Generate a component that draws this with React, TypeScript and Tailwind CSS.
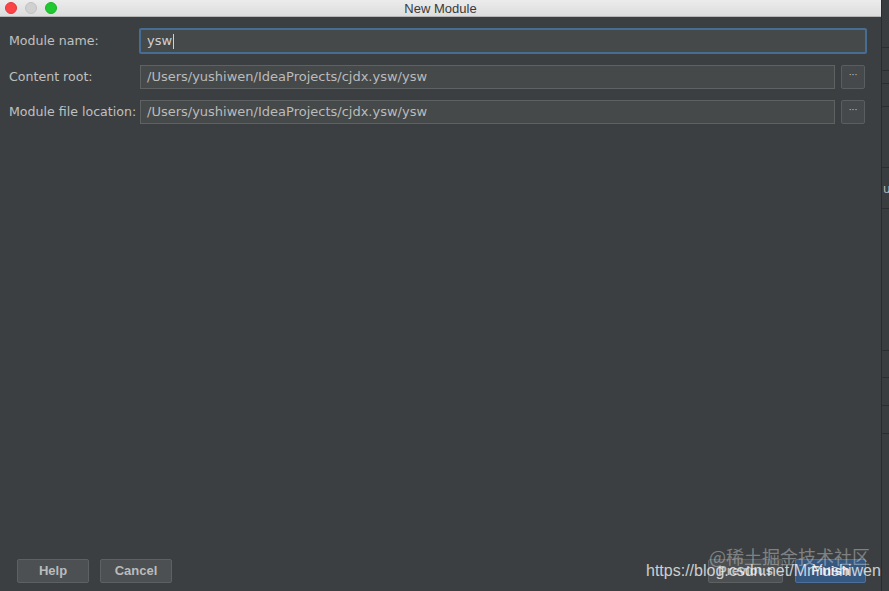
const labelFont = { fontFamily: '"DejaVu Sans", "Open Sans", sans-serif' };

function PathField({ value }: { value: string }) {
  return (
    <div className="flex items-center gap-[6px]">
      <div className="h-[24px] w-[695px] border border-[#5f6263] bg-[#45494a] px-[6px] flex items-center text-[13px] text-[#bbbbbb]">
        {value}
      </div>
      <button className="h-[24px] w-[24px] rounded-[2px] border border-[#5b5e60] bg-[#46494b] flex items-center justify-center text-[9px] leading-none text-[#c8c8c8] pb-[3px]">
        ···
      </button>
    </div>
  );
}

export default function App() {
  const stripLines = [47, 70, 83, 106, 167, 208, 350, 377, 405, 433];
  return (
    <div className="relative flex h-[591px] w-[889px] overflow-hidden bg-[#3c3f41]" style={labelFont}>
      {/* Dialog */}
      <div className="flex w-[881px] flex-col">
        {/* Title bar */}
        <div className="relative flex h-[17px] items-center border-b border-[#b5b5b5] bg-gradient-to-b from-[#ececec] to-[#dcdcdc]">
          <div className="flex items-center gap-[8px] pl-[5px]">
            <span className="h-[12px] w-[12px] rounded-full bg-[#fc4346] border border-[#e0393c]" />
            <span className="h-[12px] w-[12px] rounded-full bg-[#d0d0d0] border border-[#c2c2c2]" />
            <span className="h-[12px] w-[12px] rounded-full bg-[#1fc92f] border border-[#19b327]" />
          </div>
          <div
            className="absolute inset-x-0 top-0 flex h-[17px] items-center justify-center text-[13px] text-[#3a3a3a]"
            style={{ fontFamily: '"Liberation Sans", Arial, sans-serif' }}
          >
            New Module
          </div>
        </div>

        {/* Form */}
        <div className="flex flex-1 flex-col">
          <div className="grid grid-cols-[140px_1fr] items-center gap-y-[11px] pl-[9px] pt-[11px]">
            <span className="text-[12.6px] text-[#c0c0c0]">Module name:</span>
            <div className="h-[26px] w-[728px] -ml-[10px] rounded-[2px] border-2 border-[#466d94] bg-[#45494a] px-[6px] flex items-center text-[13px] text-[#d0d0d0]">
              ysw<span className="ml-[1px] h-[15px] w-px bg-[#d0d0d0]" />
            </div>
            <span className="text-[12.6px] text-[#c0c0c0]">Content root:</span>
            <div className="-ml-[9px]">
              <PathField value="/Users/yushiwen/IdeaProjects/cjdx.ysw/ysw" />
            </div>
            <span className="text-[12.6px] text-[#c0c0c0]">Module file location:</span>
            <div className="-ml-[9px]">
              <PathField value="/Users/yushiwen/IdeaProjects/cjdx.ysw/ysw" />
            </div>
          </div>

          <div className="flex-1" />

          {/* Footer buttons */}
          <div
            className="flex items-center justify-between pb-[8px] pl-[17px] pr-[15px] text-[13px]"
            style={{ fontFamily: '"Liberation Sans", Arial, sans-serif' }}
          >
            <div className="flex gap-[11px]">
              <button className="h-[24px] w-[72px] rounded-[2px] border border-[#5e6162] bg-[#4c5052] font-bold text-[#bbbbbb]">
                Help
              </button>
              <button className="h-[24px] w-[72px] rounded-[2px] border border-[#5e6162] bg-[#4c5052] font-bold text-[#bbbbbb]">
                Cancel
              </button>
            </div>
            <div className="flex gap-[12px]">
              <button className="h-[24px] w-[75px] rounded-[2px] border border-[#5e6162] bg-[#4c5052] font-bold text-[#bbbbbb]">
                Previous
              </button>
              <button className="h-[24px] w-[71px] rounded-[2px] border border-[#4c6f9c] bg-[#365880] font-bold text-[#e6e6e6]">
                Finish
              </button>
            </div>
          </div>
        </div>
      </div>

      {/* Background window strip */}
      <div className="relative w-[8px] border-l border-[#2a2b2c] bg-[#3a3d3f]">
        {stripLines.map((y) => (
          <div key={y} className="absolute left-0 right-0 h-px bg-[#2b2d2e]" style={{ top: y }} />
        ))}
        <span className="absolute left-[1px] top-[180px] text-[12px] text-[#bbbbbb]">u</span>
      </div>

      {/* Watermark */}
      <div
        className="pointer-events-none absolute left-[709px] top-[547px] text-[18px] leading-none text-white/35"
        style={{ fontFamily: '"Noto Sans CJK SC", sans-serif' }}
      >
        @稀土掘金技术社区
      </div>
      <div
        className="pointer-events-none absolute left-[646px] top-[563px] text-[16px] leading-none text-white/75"
        style={{ fontFamily: '"Liberation Sans", Arial, sans-serif' }}
      >
        https://blog.csdn.net/MrYushiwen
      </div>
    </div>
  );
}
